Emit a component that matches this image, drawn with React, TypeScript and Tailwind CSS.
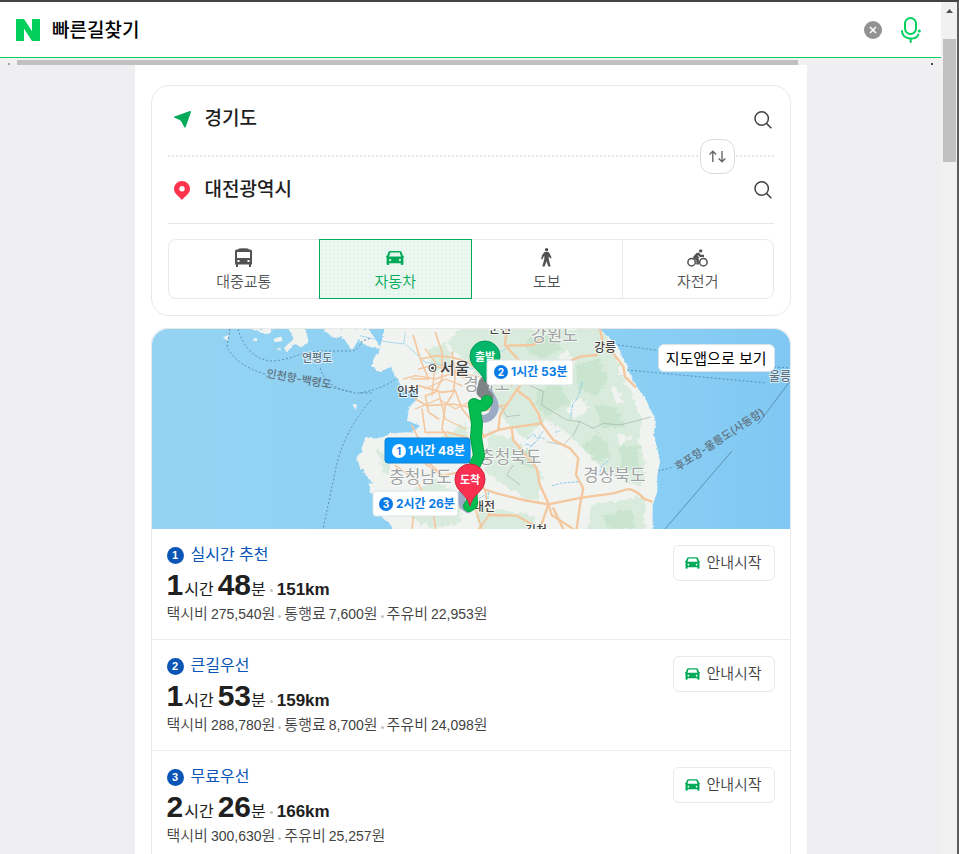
import { useState } from "react";
import type { ComponentType } from "react";

const BusIcon = () => (
	<svg width="17" height="19" viewBox="0 0 17 19" fill="currentColor" aria-hidden="true">
		<path
			fillRule="evenodd"
			d="M4 .6Q8.500-.2 13 .6L14 1.500H15.500Q17 1.700 17 3.200V16.500H16V19H14V16.500H3V19H1V16.500H0V3.200Q0 1.700 1.500 1.500H3ZM2 4V10H15V4ZM2.500 12V14H4.500V12ZM12.500 12V14H14.500V12Z"
		/>
	</svg>
);

const CarIcon = ({ className = "w-[18px] h-[14px]" }: { className?: string }) => (
	<svg className={className} viewBox="0 0 18 14" fill="currentColor" aria-hidden="true">
		<path
			fillRule="evenodd"
			d="M4.200 0H13.800Q15.200.1 15.700 1.300L16.900 4.700H18V5.900H17.400V13Q17.400 14 16.400 14H15.700Q14.800 14 14.800 13V12.200H3.200V13Q3.200 14 2.300 14H1.600Q.6 14 .6 13V5.900H0V4.700H1.100L2.300 1.300Q2.800.1 4.200 0ZM4.300 1.500L3 5.600H15L13.700 1.500ZM4.100 8A1 1 0 1 0 4.110 8ZM13.900 8A1 1 0 1 0 13.910 8Z"
		/>
	</svg>
);

const WalkIcon = () => (
	<svg width="11" height="19" viewBox="0 0 11 19" fill="currentColor" aria-hidden="true">
		<circle cx="5.600" cy="1.800" r="1.700" />
		<path d="M3.500 4H7Q7.900 4 8.200 4.800L10.600 9.400 9.300 10.400 7.700 8.300V11L9.600 18.500H7.300L5.500 13.200 3.600 18.500H1.300L3.300 11V7.500L2.300 9.200 1.600 11.500.2 10.900 1 7.300Z" />
	</svg>
);

const BikeIcon = () => (
	<svg width="21" height="18" viewBox="0 0 21 18" fill="none" stroke="currentColor" aria-hidden="true">
		<circle cx="4.600" cy="13.200" r="3.700" strokeWidth="1.500" />
		<circle cx="16.400" cy="13.200" r="3.700" strokeWidth="1.500" />
		<circle cx="13.700" cy="1.900" r="1.700" fill="currentColor" stroke="none" />
		<path d="M10.800 4.500L7.400 8.300 10.600 10.800V15.500" strokeWidth="2.600" strokeLinejoin="round" />
		<path d="M10.500 4.200L13.500 6.800H17M9.300 7L11.600 9.300" strokeWidth="2.200" />
	</svg>
);

const SearchIcon = () => (
	<svg width="18" height="18" viewBox="0 0 18 18" fill="none" stroke="#424242" strokeWidth="1.500" aria-hidden="true">
		<circle cx="7.700" cy="7.500" r="6.700" />
		<path d="M12.500 12.400L17.300 17.200" />
	</svg>
);

type Mode = { id: string; label: string; Icon: ComponentType };

const modes: Mode[] = [
	{ id: "transit", label: "대중교통", Icon: BusIcon },
	{ id: "car", label: "자동차", Icon: CarIcon },
	{ id: "walk", label: "도보", Icon: WalkIcon },
	{ id: "bike", label: "자전거", Icon: BikeIcon },
];

const routes = [
	{
		name: "실시간 추천",
		hour: 1,
		min: 48,
		km: "151km",
		costs: [
			["택시비", "275,540"],
			["통행료", "7,600"],
			["주유비", "22,953"],
		],
	},
	{
		name: "큰길우선",
		hour: 1,
		min: 53,
		km: "159km",
		costs: [
			["택시비", "288,780"],
			["통행료", "8,700"],
			["주유비", "24,098"],
		],
	},
	{
		name: "무료우선",
		hour: 2,
		min: 26,
		km: "166km",
		costs: [
			["택시비", "300,630"],
			["주유비", "25,257"],
		],
	},
];

const Header = () => {
	const [query, setQuery] = useState("빠른길찾기");
	return (
		<header className="flex h-14 items-center border-b border-[#03cf5d] bg-white pl-4 pr-5">
			<a href="#" aria-label="홈">
				<svg width="24" height="22" viewBox="0 0 24 22" fill="#03cf5d" aria-hidden="true">
					<path d="M0 0H8L16 12.300V0H24V22H16L8 9.700V22H0Z" />
				</svg>
			</a>
			<input
				aria-label="검색어"
				value={query}
				onChange={(e) => setQuery(e.target.value)}
				className="ml-3 min-w-0 flex-1 bg-transparent pt-[3px] text-[19px] font-medium text-black outline-none"
			/>
			<button type="button" aria-label="지우기" onClick={() => setQuery("")}>
				<svg width="18" height="18" viewBox="0 0 18 18" aria-hidden="true">
					<circle cx="9" cy="9" r="9" fill="#929294" />
					<path d="M6 6L12 12M12 6L6 12" stroke="#fff" strokeWidth="1.500" />
				</svg>
			</button>
			<button type="button" aria-label="음성검색" className="ml-[19px]">
				<svg width="20" height="26" viewBox="0 0 20 26" fill="none" stroke="#03cf5d" strokeWidth="2" strokeLinecap="round" aria-hidden="true">
					<rect x="4" y="1" width="11" height="16" rx="5.500" />
					<path d="M.9 14C2 23 14.500 23.500 17.400 17.600M9.700 21.500V25" />
					<circle cx="18.300" cy="14" r="1.600" fill="#03cf5d" stroke="none" />
				</svg>
			</button>
		</header>
	);
};

const RouteMap = () => (
	<div className="relative h-[200px] overflow-hidden rounded-t-2xl">
		<svg className="h-full w-full font-['Inter','Noto_Sans_CJK_KR',sans-serif]" viewBox="0 0 638 200" preserveAspectRatio="xMidYMid slice" role="img" aria-label="경로 지도">
			<defs>
				<linearGradient id="sea">
					<stop offset="0" stopColor="#94d3f2" />
					<stop offset=".75" stopColor="#8bcff4" />
					<stop offset="1" stopColor="#80c8f3" />
				</linearGradient>
				<filter id="rough" x="-10%" y="-10%" width="120%" height="120%">
					<feTurbulence type="fractalNoise" baseFrequency=".07" numOctaves="5" seed="4" />
					<feDisplacementMap in="SourceGraphic" scale="26" xChannelSelector="R" yChannelSelector="G" />
					<feGaussianBlur stdDeviation=".8" />
				</filter>
				<filter id="coast" x="-10%" y="-10%" width="120%" height="120%">
					<feTurbulence type="fractalNoise" baseFrequency=".09" numOctaves="3" seed="9" />
					<feDisplacementMap in="SourceGraphic" scale="9" xChannelSelector="R" yChannelSelector="G" />
				</filter>
				<clipPath id="land">
					<path transform="scale(.33333)" d="M700 0H1340L1390 48 1415 98 1438 158 1473 208 1490 248 1502 278 1494 318 1506 358 1514 398 1506 438 1506 488 1492 528V600H740L690 560 690 470 640 400 650 330 800 300 700 100Z" />
				</clipPath>
			</defs>
			<rect width="638" height="200" fill="url(#sea)" />

			{/* coastline and islands */}
			<g transform="scale(.33333)" fill="#f0f3ef" filter="url(#coast)">
				<path d="M700-30H1330L1344 0 1394 48 1419 98 1444 158 1479 208 1499 248 1512 278 1504 318 1516 358 1524 398 1516 438 1516 488 1502 528V630H730L718 590 690 565 685 510 660 460 634 430 650 390 628 360 640 325 680 330 720 312 780 310 805 290 765 275 772 235 800 205 795 180 755 182 735 150 708 100 680 75 690 30Z" />
				<path d="M300 0H365L350 16 320 10ZM410 0H460L470 35 450 55 430 45 405 68 398 55 425 30ZM510 0H650L690 60 640 50 620 30 600 65 570 20 550 30Z" />
				<path d="M365 30L388 22 392 35 368 40ZM305 28H315V36H305ZM375 62L385 55 386 65ZM212 25L230 18 228 35ZM600 225L615 228 610 240ZM668 78L700 70 715 115 680 130 660 110ZM614 385L650 340 690 400 650 420 625 420ZM650 460L690 480 680 500 655 490Z" />
			</g>

			{/* hills */}
			<g clipPath="url(#land)">
				<g transform="scale(.33333)" fill="#d9ebdc" filter="url(#rough)">
					<path d="M960-30H1340L1380 60 1405 130 1450 220 1470 290 1460 330 1480 400 1470 470 1400 450 1330 400 1280 340 1240 310 1180 270 1120 330 1080 300 1030 230 990 150 930 90 880 40Z" />
					<path d="M1010 310L1080 330 1140 380 1170 440 1160 520 1110 500 1060 470 1000 430ZM1320 530L1480 500V630H1300ZM980 530L1140 560 1180 630H980ZM780 490L850 450 920 500 930 580 840 600 770 560Z" />
					<path d="M830 60L880 40 900 110 850 130ZM670 350L720 400 700 440ZM850 340L940 280 950 350 890 390Z" />
				</g>
				<g transform="scale(.33333)" fill="#c9e4cf" filter="url(#rough)">
					<path d="M1120 30L1200 20 1230 60 1180 90 1130 70ZM1270 110L1340 90 1370 150 1330 200 1280 180ZM1160 180L1220 160 1250 220 1190 260 1150 230ZM1330 230L1390 230 1420 290 1350 300ZM1290 350L1340 310 1380 380 1340 400ZM1400 350L1460 350 1460 420 1410 430ZM1090 360L1130 360 1140 420 1100 400ZM1350 560L1440 540 1450 600H1370ZM970 40L1010 30 1040 80 990 80ZM1090 110L1140 120 1130 170 1100 160Z" />
				</g>
				<g transform="scale(.33333)" fill="#f0f3ef" filter="url(#rough)">
					<path d="M1220 80L1250 60 1270 110 1240 130ZM1240 240L1290 200 1310 240 1270 270ZM1380 170L1400 190 1420 230 1390 220ZM1200 300L1240 310 1260 350 1210 330ZM1400 310L1440 330 1400 350Z" />
				</g>
				<path transform="translate(318 -4) scale(.33333)" fill="none" stroke="#a6b3ab" strokeWidth="2" d="M135 130L155 170 220 200 215 240 290 285 330 290 370 310 400 295 450 300 490 290 545 275M330 290L310 330 280 360 230 350M90 240L110 275 150 270M130 420L110 450 150 480" />
			</g>

			{/* water inland */}
			<g transform="scale(.33333)" fill="none" stroke="#8acbf0" strokeWidth="3">
				<path d="M624 20L700 38 755 45 760 10M760 45L820 100 960 120 1010 90 1060 60" strokeWidth="2" />
				<path d="M1125 330L1145 315 1155 330 1175 305M1120 345L1140 350 1165 325 1180 330M1135 355L1150 340M1290 160L1280 200 1262 225 1255 270" strokeDasharray="12 4 5 3" />
				<path d="M1340 440L1350 410 1375 390M1210 310L1225 305M1200 470L1230 462 1280 458M980 510L1010 490 1005 530" strokeDasharray="8 4" />
			</g>

			{/* roads */}
			<g transform="scale(.33333)" fill="none" stroke="#f4c79e" strokeWidth="5" strokeLinejoin="round" strokeLinecap="round">
				<path d="M784 20L805 90 830 150 780 150M805 90L855 80 900 85 950 100 1000 140 1080 170" />
				<path d="M760 180L800 170 870 190 910 185 930 240 980 300 1000 323" />
				<path d="M790 210L825 230 900 225 960 235 1000 245 1058 228M810 240L820 310 890 310 960 330" />
				<path d="M850 10L870 70 870 150 850 190 820 200 830 250 860 270M900 70L910 130 905 190 880 230 870 300 900 350" />
				<path d="M780 290L800 330 880 370 950 390 980 450 1000 485M745 380L800 390 870 440 920 430 1000 483" />
				<path d="M730 410L790 450 820 500 870 530 970 540 990 600M790 500L780 600M840 510L850 600M840 330L830 400 870 440M1000 483L1010 560 980 600" />
				<path d="M755 150L790 140 850 150 910 130 990 145M820 180L880 150 930 170M790 240L860 210 910 240 970 210M860 190L880 270 940 300M800 120L840 110 890 120 940 150M820 60L850 100 840 200" strokeWidth="4" />
				<g transform="translate(954 -12)" strokeWidth="7">
					<path d="M110 12L105 60 150 110 170 160 140 195 180 225 205 265 215 298 250 345 300 370 325 400 318 450 340 490 330 540 320 612" />
					<path d="M40 335L85 315 120 308 215 295M125 310L130 345 200 430 210 480 235 535 245 570 310 612M85 315L90 270 140 195" />
					<path d="M50 495L80 505 160 525 235 538 335 518 430 505 475 492Q500 495 520 520L545 530" />
					<path d="M300 108L330 95 380 90M115 62L190 60 210 45M390 12L400 60 430 85 460 125 465 155 495 185M60 570L140 572 190 600M235 538L210 612M250 550L280 612" />
				</g>
			</g>

			{/* ferry lines */}
			<g fill="none" stroke="#5c91b3" strokeWidth="1" strokeDasharray="2 2">
				<path d="M86 0C91 17 102 31 120 32C139 31 145 24 167 22H199Q206 22 210 12L219 9" />
				<path d="M78 0L75 18Q85 37 113 45L116 50M168 39Q173 56 194 62L203 64H220M174 57L200 63" />
				<path d="M219 71Q191 104 184 139L171 200M208 64Q230 60 244 50" />
				<path d="M466 16L510 22M475 41L614 54M506 142L522 138M606 37L638 39" />
				<path d="M638 52L606 95M580 122L513 200" strokeDasharray="none" />
			</g>

			{/* place names */}
			<g className="font-medium" paintOrder="stroke" stroke="#fff" strokeWidth="2" strokeOpacity=".7" strokeLinejoin="round">
				<g fill="#5f7280" fontSize="11">
					<text x="150" y="33">연평도</text>
					<text x="114" y="48" transform="rotate(10 114 48)" strokeWidth="0">인천항-백령도</text>
					<text x="617" y="52" fontSize="12">울릉</text>
					<text x="526" y="142" transform="rotate(-33 526 142)" strokeWidth="0">후포항-울릉도(사동항)</text>
				</g>
				<g fill="#a0a3a3" fontSize="17" className="font-normal">
					<text x="379" y="12">강원도</text>
					<text x="311" y="61">경기도</text>
					<text x="237" y="154">충청남도</text>
					<text x="327" y="134">충청북도</text>
					<text x="431" y="152">경상북도</text>
				</g>
				<g fill="#424242">
					<text x="337" y="4" fontSize="12">춘천</text>
					<text x="288" y="45" fontSize="16">서울</text>
					<text x="245" y="67" fontSize="12">인천</text>
					<text x="442" y="23" fontSize="12">강릉</text>
					<text x="321" y="182" fontSize="12">대전</text>
					<text x="373" y="206" fontSize="12">김천</text>
				</g>
			</g>
			<circle cx="280.500" cy="39" r="3.500" fill="#fff" stroke="#424242" />
			<circle cx="280.500" cy="39" r="1.500" fill="#424242" />

			{/* route */}
			<g fill="none" strokeLinecap="round" strokeLinejoin="round">
				<path d="M336 63Q346 76 341 84Q338 90 329 90M310 165Q307 175 316 180" stroke="#9caac5" strokeWidth="8" />
				<path d="M332 54L330 63 336 68" stroke="#7d8483" strokeWidth="11" />
				<path d="M335 72Q331 80 322 75L325 95 324 108 327 127 319 144 320 175 317 177" stroke="#06a246" strokeWidth="12" />
				<path d="M335 72Q331 80 322 75L325 95 324 108 327 127 319 144 320 175 317 177" stroke="#04bc50" strokeWidth="10" />
			</g>

			{/* start and goal pins */}
			<g className="font-bold" fontSize="11" textAnchor="middle">
				<path d="M333 53C330 42 318 39 318 27A15 15 0 0 1 348 27C348 39 336 42 333 53Z" fill="#04b66b" stroke="#079956" />
				<text x="333" y="32" fill="#fff">출발</text>
				<path d="M318 177C315 164 303 163 303 150A15 15 0 0 1 333 150C333 163 321 164 318 177Z" fill="#fa3050" stroke="#cf2540" />
				<text x="318" y="155" fill="#fff">도착</text>
			</g>

			{/* travel time labels */}
			<g className="font-bold" fontSize="12">
				<rect x="335" y="31" width="86" height="25" rx="3" fill="#fff" stroke="#dce4e6" />
				<circle cx="349" cy="43" r="7" fill="#087be7" />
				<text x="349" y="47" fontSize="10" fill="#fff" textAnchor="middle">2</text>
				<text x="359" y="47" fill="#087be7">1시간 53분</text>

				<rect x="233" y="109" width="85" height="25" rx="3" fill="#0a96f8" stroke="#0b83da" />
				<circle cx="247" cy="122" r="7" fill="#fff" />
				<text x="247" y="126" fontSize="10" fill="#087be7" textAnchor="middle">1</text>
				<text x="256" y="126" fill="#fff">1시간 48분</text>

				<rect x="221" y="162" width="85" height="25" rx="3" fill="#fff" stroke="#dce4e6" />
				<circle cx="234" cy="175" r="7" fill="#087be7" />
				<text x="234" y="179" fontSize="10" fill="#fff" textAnchor="middle">3</text>
				<text x="244" y="179" fill="#087be7">2시간 26분</text>
			</g>
		</svg>
		<button type="button" className="absolute right-[15px] top-[15px] h-7 rounded-md border border-[#d8e4ea] bg-white px-[7px] text-[15px] leading-none text-black">
			지도앱으로 보기
		</button>
	</div>
);

const App = () => {
	const [mode, setMode] = useState("car");
	const [start, setStart] = useState("경기도");
	const [goal, setGoal] = useState("대전광역시");

	const swap = () => {
		setStart(goal);
		setGoal(start);
	};

	return (
		<div className="flex h-screen overflow-hidden border-r-2 border-t-2 border-r-[#5b5d58] border-t-[#444444] bg-[#efeff1] font-['Liberation_Sans','Noto_Sans_CJK_KR',sans-serif] text-[#202020]">
			<div className="min-w-0 flex-1">
				<Header />
				<div className="flex h-[7px] justify-between bg-[#f1f1f1] pt-[2px]">
					<span className="flex w-[17px] items-end justify-center">
						<span className="h-[2px] w-[2px] bg-[#a3a3a3]" />
					</span>
					<span className="w-[83%] bg-[#c1c1c1]" />
					<span className="flex flex-1 items-end justify-end pr-2">
						<span className="h-[2px] w-[2px] bg-[#505050]" />
					</span>
				</div>

				<main className="mx-auto max-w-[672px] bg-white px-4 pt-5">
					<section className="rounded-[18px] border border-[#e9e9e9] px-4 pb-4">
						<div className="relative flex h-[71px] items-center border-b-2 border-dotted border-[#e6e6e6] pb-[2px] pl-[6px]">
							<svg width="17" height="17" viewBox="0 0 17 17" fill="#03aa5a" className="shrink-0" aria-hidden="true">
								<path d="M.5 5.500L16 0Q17 0 17 1L11.700 16Q11 17.400 10.200 16L7.700 11.200Q7 9.800 5.700 9L.5 6.700Q-.3 6 .5 5.500Z" />
							</svg>
							<input
								aria-label="출발지"
								value={start}
								onChange={(e) => setStart(e.target.value)}
								className="ml-[14px] min-w-0 flex-1 bg-transparent text-[19px] font-medium outline-none"
							/>
							<button type="button" aria-label="출발지 검색" className="mr-[2px]">
								<SearchIcon />
							</button>
							<button
								type="button"
								aria-label="출발지 도착지 바꾸기"
								onClick={swap}
								className="absolute -bottom-[19px] right-[39px] flex size-[35px] items-center justify-center rounded-xl border border-[#d9dbda] bg-white"
							>
								<svg width="17" height="13" viewBox="0 0 17 13" fill="none" stroke="#666" strokeWidth="1.400" aria-hidden="true">
									<path d="M3.800 12V1M.5 4.500L3.800 1.200 7.100 4.500M13 1V12M9.700 8.500L13 11.800 16.300 8.500" />
								</svg>
							</button>
						</div>
						<div className="flex h-[67px] items-center border-b border-[#e6e6e6] pl-[6px]">
							<svg width="17" height="19" viewBox="0 0 17 19" className="shrink-0" aria-hidden="true">
								<path fill="#ff334b" fillRule="evenodd" d="M8 0A8 8 0 0 1 16 8C16 13 11 15 8.600 18.500H7.400C5 15 0 13 0 8A8 8 0 0 1 8 0ZM8 5A2.800 2.800 0 1 0 8.010 5Z" />
							</svg>
							<input
								aria-label="도착지"
								value={goal}
								onChange={(e) => setGoal(e.target.value)}
								className="ml-[14px] min-w-0 flex-1 bg-transparent text-[19px] font-medium outline-none"
							/>
							<button type="button" aria-label="도착지 검색" className="mr-[2px]">
								<SearchIcon />
							</button>
						</div>

						<div className="mt-[15px] grid h-[60px] grid-cols-4">
							{modes.map(({ id, label, Icon }) => (
								<button
									key={id}
									type="button"
									aria-pressed={mode === id}
									onClick={() => setMode(id)}
									className={`-mr-px flex flex-col items-center border pt-2 last:mr-0 first:rounded-l-lg last:rounded-r-lg ${
										mode === id
											? "relative z-10 border-[#03aa5a] bg-[#ebf8f1] bg-[radial-gradient(#e2f3ea_1px,transparent_1px)] bg-[size:4px_4px] text-[#03aa5a]"
											: "border-[#e9e9e9] text-[#505253]"
									}`}
								>
									<span className="flex h-[19px] items-center">
										<Icon />
									</span>
									<span className="mt-[5px] text-[15px] leading-5 font-[350]">{label}</span>
								</button>
							))}
						</div>
					</section>

					<section className="mt-3 rounded-t-2xl border border-b-0 border-[#e9e9e9]">
						<RouteMap />
						<ol>
							{routes.map((route, i) => (
								<li key={route.name} className="flex items-start justify-between border-b border-[#ececec] px-[15px] pb-[15px] pt-4">
									<div>
										<h2 className="flex h-5 items-center text-[16px] text-[#0a55b5]">
											<span className="mr-[7px] flex size-[17px] items-center justify-center rounded-full bg-[#0a55b5] text-[11px] font-bold text-white">
												{i + 1}
											</span>
											{route.name}
										</h2>
										<p className="flex h-[39px] items-baseline text-[16px] leading-[39px]">
											<strong className="text-[30px]">{route.hour}</strong>
											<span className="ml-px">시간</span>
											<strong className="ml-1 text-[30px]">{route.min}</strong>
											<span>분</span>
											<span className="mx-1 mt-3 size-[3px] self-center rounded-full bg-[#c4c4c4]" />
											<strong className="text-[17px]">{route.km}</strong>
										</p>
										<p className="flex h-5 items-baseline text-[15px] leading-5 text-[#424242] font-[350]">
											{route.costs.map(([label, price], n) => (
												<span key={label} className="flex items-baseline">
													{n > 0 && <span className="mx-[3px] mt-1 size-[3px] self-center rounded-full bg-[#c4c4c4]" />}
													{label}
													<span className="ml-[3px] text-[14px]">{price}</span>원
												</span>
											))}
										</p>
									</div>
									<button type="button" className="flex h-9 w-[102px] items-center justify-center gap-[6px] rounded-md border border-[#e9e9e9] text-[15px] text-[#424242] font-[350]">
										<CarIcon className="h-3 w-[15px] text-[#03aa5a]" />
										안내시작
									</button>
								</li>
							))}
						</ol>
					</section>
				</main>
			</div>

			<div className="flex w-4 shrink-0 flex-col items-center bg-[#f1f1f1] pt-[7px]">
				<svg width="7" height="4" viewBox="0 0 7 4" fill="#505050" aria-hidden="true">
					<path d="M0 4L3.500 0 7 4Z" />
				</svg>
				<span className="mt-[26px] h-[123px] w-[13px] bg-[#c1c1c1]" />
			</div>
		</div>
	);
};

export default App;
